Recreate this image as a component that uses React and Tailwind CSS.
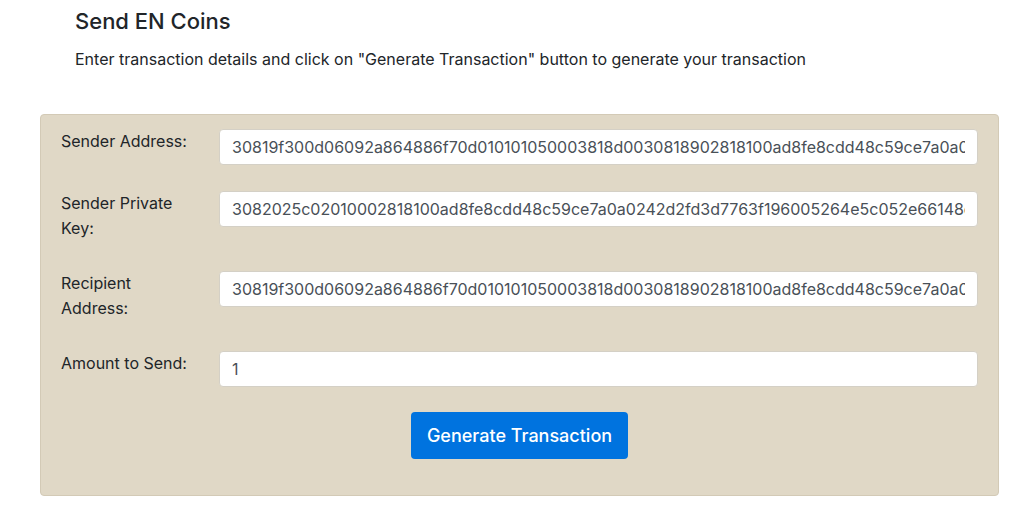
const senderAddress = '30819f300d06092a864886f70d010101050003818d0030818902818100ad8fe8cdd48c59ce7a0a0242d2fd3d7763f196005264e5c052e66148b0203010001'
const privateKey = '3082025c02010002818100ad8fe8cdd48c59ce7a0a0242d2fd3d7763f196005264e5c052e66148d2a1f0b9c0e3a'
const recipient = '30819f300d06092a864886f70d010101050003818d0030818902818100ad8fe8cdd48c59ce7a0a0242d2fd3d7763f1960052'

function Field({ label, value, className }) {
  return (
    <div className={`flex items-start ${className}`}>
      <div className="w-[158px] shrink-0">
        <label className="block w-[130px] text-[16px] leading-[25px] text-[#212529]">{label}</label>
      </div>
      <input
        readOnly
        value={value}
        className="h-[36px] flex-1 min-w-0 rounded-[4px] border border-[#d4d0c6] bg-white px-[12px] text-[16px] text-[#495057] outline-none"
      />
    </div>
  )
}

export default function App() {
  return (
    <div className="min-h-[508px] bg-white font-['Inter',sans-serif] text-[#212529]">
      <div className="pl-[75px] pt-[7px]">
        <h2 className="text-[22px] leading-[29px] font-medium">Send EN Coins</h2>
        <p className="mt-[11px] text-[16px] leading-[24px]">Enter transaction details and click on "Generate Transaction" button to generate your transaction</p>
      </div>

      <div className="ml-[40px] mt-[43px] w-[959px] rounded-[4px] border border-[#d3cab6] bg-[#e0d8c6] px-[20px] pt-[14px] pb-[36px]">
        <Field label="Sender Address:" value={senderAddress} className="mb-[26px]" />
        <Field label="Sender Private Key:" value={privateKey} className="mb-[30px]" />
        <Field label="Recipient Address:" value={recipient} className="mb-[30px]" />
        <Field label="Amount to Send:" value="1" className="mb-[25px]" />
        <div className="flex justify-center">
          <button className="h-[47px] w-[217px] rounded-[4px] bg-[#0073df] text-[18px] font-medium text-white">Generate Transaction</button>
        </div>
      </div>
    </div>
  )
}
